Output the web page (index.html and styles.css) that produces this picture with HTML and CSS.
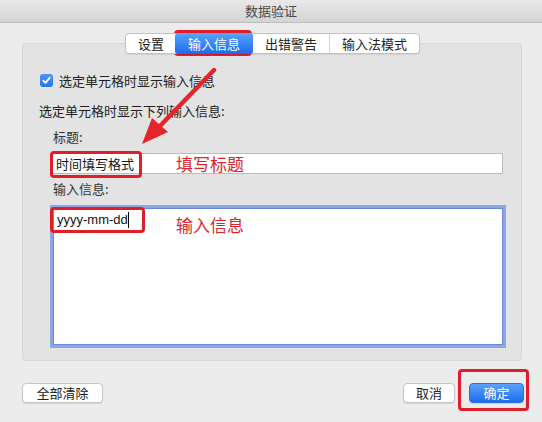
FILE: index.html
```html
<!DOCTYPE html>
<html lang="zh-CN">
<head>
<meta charset="utf-8">
<title>数据验证</title>
<link rel="stylesheet" href="styles.css">
</head>
<body>
<div class="window">
  <div class="titlebar">数据验证</div>
  <div class="body">
    <div class="tabs">
      <div class="tab">设置</div>
      <div class="tab active">输入信息</div>
      <div class="tab">出错警告</div>
      <div class="tab">输入法模式</div>
    </div>
    <div class="panel">
      <label class="check-row"><span class="checkbox"><svg width="9" height="9" viewBox="0 0 9 9"><path d="M1.3 4.6 L3.5 6.9 L7.8 1.6" fill="none" stroke="#fff" stroke-width="1.8" stroke-linecap="round" stroke-linejoin="round"/></svg></span>选定单元格时显示输入信息</label>
      <div class="section-label">选定单元格时显示下列输入信息:</div>
      <div class="field-label">标题:</div>
      <div class="input">时间填写格式</div>
      <div class="field-label second">输入信息:</div>
      <div class="textarea"><span class="mono">yyyy-mm-dd</span><span class="caret"></span></div>
    </div>
    <div class="buttons">
      <div class="btn">全部清除</div>
      <div class="spacer"></div>
      <div class="btn">取消</div>
      <div class="btn primary">确定</div>
    </div>
  </div>

  <div class="mark mark-tab"></div>
  <div class="mark mark-title"></div>
  <div class="mark mark-text"></div>
  <div class="mark mark-ok"></div>
  <div class="note note-title">填写标题</div>
  <div class="note note-text">输入信息</div>
  <svg class="arrow" width="100" height="90" viewBox="0 0 100 90">
    <path d="M86 2 L32 58" stroke="#e3262b" stroke-width="4.5" stroke-linecap="round"/>
    <path d="M14 76 L24 50 L40 64 Z" fill="#e3262b"/>
  </svg>
</div>
</body>
</html>
```

FILE: styles.css
```css
* { box-sizing: border-box; }
html, body { margin: 0; padding: 0; }
body {
  width: 542px;
  height: 422px;
  background: #ececec;
  font-family: "Noto Sans CJK SC", "Liberation Sans", sans-serif;
  font-size: 13px;
  color: #222;
  overflow: hidden;
}
.window {
  position: relative;
  width: 542px;
  height: 422px;
  background: #ececec;
}
.titlebar {
  height: 23px;
  line-height: 22px;
  text-align: center;
  color: #4a4a4a;
  font-size: 13px;
  background: linear-gradient(#e9e9e9, #d4d4d4);
  border-bottom: 1px solid #bdbdbd;
}
.body {
  padding: 10px 20px 0 22px;
}
.tabs {
  position: relative;
  z-index: 2;
  display: flex;
  width: max-content;
  margin: 0 0 0 103px;
  height: 21px;
  background: #fff;
  border: 1px solid #c3c3c3;
  border-radius: 4px;
  box-shadow: 0 1px 1px rgba(0,0,0,0.08);
}
.tab {
  padding: 0 12px;
  line-height: 19px;
  border-left: 1px solid #d2d2d2;
  color: #222;
}
.tab:first-child { border-left: none; padding: 0 11px 0 12px; }
.tab.active {
  background: linear-gradient(#5aa2fb, #1c6cf0);
  color: #fff;
  border-left: none;
  border-radius: 3px;
  margin: -1px 0;
  line-height: 21px;
  padding: 0 13px;
}
.tab.active + .tab { border-left: none; }
.panel {
  margin-top: -11px;
  height: 318px;
  width: 500px;
  background: #e3e3e3;
  border: 1px solid #d6d6d6;
  border-radius: 4px;
  padding: 27px 16px 0 16px;
  display: flex;
  flex-direction: column;
  align-items: flex-start;
}
.check-row {
  display: flex;
  align-items: center;
  gap: 6px;
  height: 18px;
  margin-left: 1px;
}
.checkbox {
  width: 13px;
  height: 13px;
  border-radius: 3px;
  background: linear-gradient(#4b94f8, #2a74ee);
  display: flex;
  align-items: center;
  justify-content: center;
}
.section-label {
  margin-top: 13px;
  height: 18px;
  line-height: 18px;
}
.field-label {
  margin-top: 8px;
  margin-left: 14px;
  height: 18px;
  line-height: 18px;
  color: #333;
}
.field-label.second { margin-top: 6px; }
.input {
  margin-top: 7px;
  margin-left: 13px;
  width: 451px;
  height: 21px;
  background: #fff;
  border: 1px solid #bcbcbc;
  line-height: 19px;
  padding-left: 3px;
  color: #111;
}
.textarea {
  margin-top: 7px;
  margin-left: 11px;
  width: 456px;
  height: 143px;
  background: #fff;
  border: 3px solid #8ea6e6;
  box-shadow: inset 0 0 0 1px #6c89d6;
  padding: 3px 4px;
  display: flex;
  align-items: flex-start;
  line-height: 18px;
}
.mono {
  font-family: "Liberation Sans", sans-serif;
  font-size: 13px;
  color: #111;
}
.caret {
  width: 1px;
  height: 16px;
  margin-top: 1px;
  background: #000;
}
.buttons {
  display: flex;
  align-items: center;
  margin-top: 22px;
  gap: 14px;
  width: 500px;
}
.spacer { flex: 1; }
.btn {
  height: 20px;
  line-height: 18px;
  padding: 0 12px;
  background: #fff;
  border: 1px solid #c5c5c5;
  border-radius: 4px;
  box-shadow: 0 1px 1px rgba(0,0,0,0.1);
  color: #222;
  text-align: center;
}
.btn:first-child { width: 81px; }
.btn.primary {
  width: 55px;
  background: linear-gradient(#5aa2fb, #1c6cf0);
  border-color: #2a6fe0;
  color: #fff;
  margin-right: -2px;
}
.mark {
  position: absolute;
  border: 3px solid #e01e2a;
  border-radius: 4px;
}
.mark-tab { left: 174px; top: 30px; width: 78px; height: 26px; }
.mark-title { left: 50px; top: 151px; width: 92px; height: 27px; }
.mark-text { left: 50px; top: 207px; width: 95px; height: 26px; }
.mark-ok { left: 458px; top: 369px; width: 71px; height: 42px; }
.note {
  position: absolute;
  color: #d8262e;
  font-size: 17px;
  line-height: 20px;
}
.note-title { left: 176px; top: 154px; }
.note-text { left: 176px; top: 215px; }
.arrow {
  position: absolute;
  left: 128px;
  top: 68px;
}
```
